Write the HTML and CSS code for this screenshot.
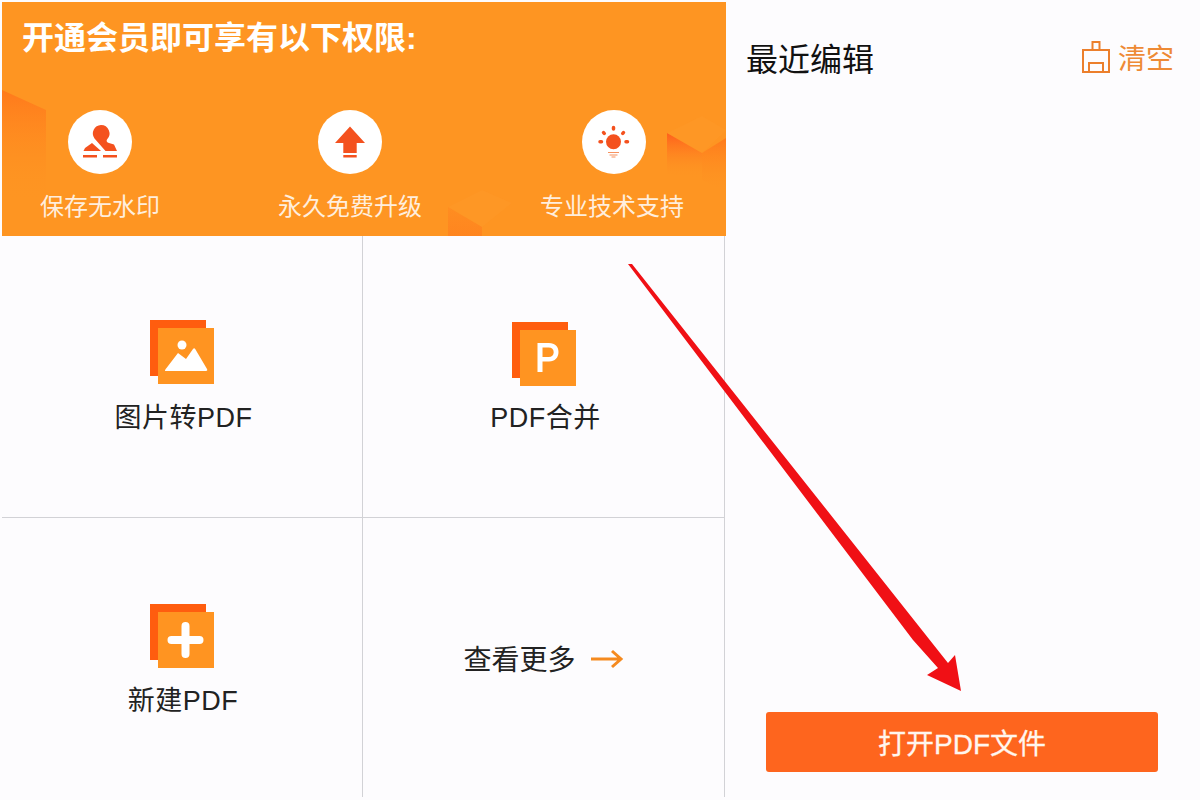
FILE: index.html
```html
<!DOCTYPE html>
<html lang="zh-CN">
<head>
<meta charset="utf-8">
<title>PDF</title>
<link rel="stylesheet" href="styles.css">
</head>
<body>
<div class="page">
  <main class="left">
    <section class="banner">
      <svg class="decor" viewBox="0 0 724 234" aria-hidden="true">
        <defs>
          <linearGradient id="fadeA" x1="0" y1="0" x2="0" y2="1"><stop offset="0" stop-color="#ff7a1c"/><stop offset="1" stop-color="#ff9522" stop-opacity="0"/></linearGradient>
          <linearGradient id="fadeB" x1="0" y1="0" x2="0" y2="1"><stop offset="0" stop-color="#ff5f1c"/><stop offset="1" stop-color="#ff9522" stop-opacity="0"/></linearGradient>
          <linearGradient id="fadeC" x1="0" y1="0" x2="0" y2="1"><stop offset="0" stop-color="#ff8a20"/><stop offset="1" stop-color="#ff7e1e"/></linearGradient>
          <linearGradient id="fadeD" x1="0" y1="0" x2="0" y2="1"><stop offset="0" stop-color="#ff7a1c"/><stop offset="1" stop-color="#ff9522" stop-opacity="0"/></linearGradient>
        </defs>
        <polygon points="0,88 44,108 44,200 0,200" fill="url(#fadeA)"/>
        <polygon points="665,131 700,151 700,176 665,172" fill="url(#fadeB)"/>
        <polygon points="700,151 724,136 724,190 700,178" fill="url(#fadeD)"/>
        <polygon points="665,131 700,114 724,128 700,151" fill="#ff9a2a" opacity=".35"/>
        <polygon points="446,205 480,188 510,201 480,225" fill="#ff9a2a" opacity=".45"/>
        <polygon points="446,205 480,225 480,234 446,234" fill="url(#fadeC)" opacity=".7"/>
      </svg>
      <h1 class="banner-title">开通会员即可享有以下权限:</h1>
      <div class="perks">
        <div class="perk perk-a">
          <span class="perk-icon">
            <svg viewBox="0 0 64 64" width="64" height="64">
              <path fill="#f4511e" d="M33 15a8.500 8.500 0 0 1 6 14.500c-1 1.500 0 3 2 3.500l5 1.500 3 6.500H37.500L26.500 28.500A8.500 8.500 0 0 1 33 15z"/>
              <path fill="#f4511e" d="M24 33l9 8H15.500l1.500-3z"/>
              <rect x="15" y="45" width="14" height="2.500" fill="#f4511e"/><rect x="35" y="45" width="14" height="2.500" fill="#f4511e"/>
            </svg>
          </span>
          <span class="perk-label">保存无水印</span>
        </div>
        <div class="perk perk-b">
          <span class="perk-icon">
            <svg viewBox="0 0 64 64" width="64" height="64">
              <path fill="#f4511e" d="M32 16.500 47 33H38.700V43H25.300V33H17z"/>
              <rect x="25.300" y="45" width="13.400" height="2.500" fill="#f4511e"/>
            </svg>
          </span>
          <span class="perk-label">永久免费升级</span>
        </div>
        <div class="perk perk-c">
          <span class="perk-icon">
            <svg viewBox="0 0 64 64" width="64" height="64">
              <circle cx="31.500" cy="31.700" r="7.500" fill="#f4511e"/>
              <path d="M31.500 17.500v1.500M21.500 22.500l.8 1M41.500 22.500l-.8 1M18 31.700h1.500M44 31.700h1.500" stroke="#f4511e" stroke-width="3.500" stroke-linecap="round"/>
              <path d="M26 42.500h11M27.500 45h8M29.500 47h4" stroke="#f7925f" stroke-width="1.200"/>
            </svg>
          </span>
          <span class="perk-label">专业技术支持</span>
        </div>
      </div>
    </section>
    <section class="tools">
      <a class="tool tool-line-r tool-line-b">
        <svg class="tool-icon" viewBox="0 0 64 64" width="64" height="64">
          <rect width="56" height="56" fill="#ff5d0f"/><rect x="8" y="8" width="56" height="56" fill="#ff9421"/>
          <circle cx="32" cy="25" r="4.500" fill="#fff"/>
          <path fill="#fff" d="M15 51c0-1 .6-2 1.500-3L28 33l8 6 7-10c.8-1 1.500-1 2.200 0L57 49c.5 1 .3 2-1 2z"/>
        </svg>
        <span class="tool-label">图片转PDF</span>
      </a>
      <a class="tool tool-line-r tool-line-b tool-p">
        <svg class="tool-icon" viewBox="0 0 64 64" width="64" height="64">
          <rect width="56" height="56" fill="#ff5d0f"/><rect x="8" y="8" width="56" height="56" fill="#ff9421"/>
          <path fill="#fff" d="M25.500 21h11.500c6 0 9.500 3.500 9.500 9s-3.500 9.500-9.500 9.500H30.500V50h-5zM30.500 25.500v9.500h6.200c3 0 5-1.700 5-4.700s-2-4.800-5-4.800z"/>
        </svg>
        <span class="tool-label">PDF合并</span>
      </a>
      <a class="tool tool-line-r tool-n">
        <svg class="tool-icon" viewBox="0 0 64 64" width="64" height="64">
          <rect width="56" height="56" fill="#ff5d0f"/><rect x="8" y="8" width="56" height="56" fill="#ff9421"/>
          <path d="M35.500 22v28M21.500 36h28" stroke="#fff" stroke-width="8" stroke-linecap="round"/>
        </svg>
        <span class="tool-label">新建PDF</span>
      </a>
      <a class="tool tool-line-r tool-more">
        <span class="more-label">查看更多</span>
        <svg class="more-arrow" viewBox="0 0 34 20" width="34" height="20"><path d="M1 10h30M22 2l9 8-9 8" fill="none" stroke="#f58a1f" stroke-width="3"/></svg>
      </a>
    </section>
  </main>
  <aside class="right">
    <header class="recent-head">
      <h2 class="recent-title">最近编辑</h2>
      <button class="clear">
        <svg class="clear-icon" viewBox="0 0 28 32" width="28" height="32"><path d="M1 9H27V31H1zM10.500 9V1H17.500V9M7 31V22H21V31" fill="none" stroke="#ec7f2c" stroke-width="2"/></svg>
        <span>清空</span>
      </button>
    </header>
    <button class="open-btn">打开PDF文件</button>
  </aside>
</div>
<svg class="arrow" viewBox="0 0 1200 800" aria-hidden="true">
  <polygon fill="#f01015" points="628,264 632,264 948,663 955,655 961,691 927,675 938,668 913,640"/>
</svg>
</body>
</html>
```

FILE: styles.css
```css
* { box-sizing: border-box; }
html, body { margin: 0; height: 100%; }
body {
  background: #fdfcfe;
  font-family: "Liberation Sans", "Noto Sans CJK SC", sans-serif;
  color: #222;
  overflow: hidden;
}
.page { display: flex; height: 800px; }
.left { width: 725px; padding: 2px 0 0 2px; flex: none; }
.banner {
  position: relative;
  height: 234px;
  margin-right: -1px;
  background: #fe9522;
  overflow: hidden;
  padding: 16px 0 0 20px;
}
.decor { position: absolute; inset: 0; width: 100%; height: 100%; }
.banner-title {
  position: relative;
  margin: 0;
  font-size: 32px;
  line-height: 40px;
  font-weight: 700;
  color: #fff;
}
.perks {
  position: relative;
  display: flex;
  margin: 52px 0 0 -20px;
}
.perk { display: flex; flex-direction: column; align-items: center; }
.perk-a { width: 196px; }
.perk-b { width: 150px; margin-left: 77px; }
.perk-c { width: 150px; margin-left: 112px; }
.perk-c .perk-icon { margin-left: 4px; }
.perk-icon {
  width: 64px; height: 64px;
  border-radius: 50%;
  background: #fff;
  display: block;
}
.perk-icon svg { display: block; }
.perk-label {
  margin-top: 16px;
  font-size: 24px;
  line-height: 34px;
  color: #ffeedd;
  white-space: nowrap;
}
.tools {
  display: grid;
  grid-template-columns: 361px 362px;
  grid-template-rows: 282px 279px;
}
.tool {
  display: flex;
  flex-direction: column;
  align-items: center;
  padding-top: 84px;
}
.tool-line-r { border-right: 1px solid #d2d2d6; }
.tool-line-b { border-bottom: 1px solid #d2d2d6; }
.tool-icon { display: block; }
.tool-label {
  margin-top: 16px;
  padding-left: 3px;
  font-size: 27px;
  line-height: 36px;
  letter-spacing: .5px;
  color: #222;
  white-space: nowrap;
}
.tool-p { padding-top: 86px; }
.tool-p .tool-label { margin-top: 14px; padding-left: 4px; }
.tool-n { padding-top: 86px; }
.tool-n .tool-label { margin-top: 15px; padding-left: 2px; }
.tool-more {
  flex-direction: row;
  justify-content: center;
  gap: 14px;
  padding-top: 6px;
}
.more-label { font-size: 28px; line-height: 36px; color: #222; }
.more-arrow { margin-bottom: 3px; }
.right {
  flex: 1;
  display: flex;
  flex-direction: column;
  padding: 39px 26px 28px 21px;
}
.recent-head {
  display: flex;
  justify-content: space-between;
  align-items: center;
  height: 42px;
}
.recent-title {
  margin: 0;
  font-size: 32px;
  line-height: 42px;
  font-weight: 400;
  color: #111;
}
.clear {
  display: flex;
  align-items: center;
  gap: 8px;
  border: 0;
  background: none;
  padding: 0;
  font: inherit;
  font-size: 28px;
  line-height: 36px;
  color: #ee8a35;
}
.clear-icon { margin-bottom: 6px; }
.open-btn {
  margin: auto 0 0 20px;
  height: 60px;
  width: 392px;
  border: 0;
  border-radius: 3px;
  background: #fe651e;
  color: #fff6ee;
  font: inherit;
  font-size: 28px;
  -webkit-text-stroke: .3px #fff6ee;
}
.arrow {
  position: absolute;
  left: 0; top: 0;
  width: 1200px; height: 800px;
  pointer-events: none;
}
```
